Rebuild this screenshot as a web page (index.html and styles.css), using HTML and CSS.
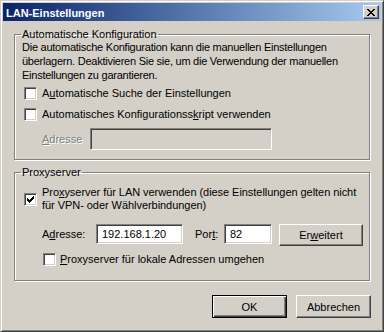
FILE: index.html
```
<html>
<head>
	<link rel="stylesheet" href="styles.css">
</head>
<body>

	<div class="window">
		<div class="titlebar">
			<span class="title">LAN-Einstellungen</span>
			<span class="close">
				<svg width="8" height="7" viewBox="0 0 8 7" shape-rendering="crispEdges"><path d="M0 0h2v1H0z M6 0h2v1H6z M1 1h2v1H1z M5 1h2v1H5z M2 2h4v1H2z M3 3h2v1H3z M2 4h4v1H2z M1 5h2v1H1z M5 5h2v1H5z M0 6h2v1H0z M6 6h2v1H6z" fill="#000"/></svg>
			</span>
		</div>

		<div class="content">
			<fieldset class="group" id="auto">
				<legend>Automatische Konfiguration</legend>
				<div class="inner">
					<p class="note">Die automatische Konfiguration kann die manuellen Einstellungen<br>überlagern. Deaktivieren Sie sie, um die Verwendung der manuellen<br>Einstellungen zu garantieren.</p>
					<div class="check first">
						<span class="box"></span>
						<span class="text">A<u>u</u>tomatische Suche der Einstellungen</span>
					</div>
					<div class="check second">
						<span class="box"></span>
						<span class="text">Automatisches Konfigurationss<u>k</u>ript verwenden</span>
					</div>
					<div class="field-row disabled">
						<span class="lbl"><u>A</u>dresse</span>
						<span class="field"></span>
					</div>
				</div>
			</fieldset>

			<fieldset class="group" id="proxy">
				<legend>Proxyserver</legend>
				<div class="inner">
					<div class="check multi">
						<span class="box">
							<svg width="7" height="7" viewBox="0 0 7 7" shape-rendering="crispEdges"><path d="M6 0h1v1H6z M5 1h2v1H5z M0 2h1v1H0z M4 2h3v1H4z M0 3h2v1H0z M3 3h3v1H3z M0 4h5v1H0z M1 5h3v1H1z M2 6h1v1H2z" fill="#000"/></svg>
						</span>
						<span class="text">Pro<u>x</u>yserver für LAN verwenden (diese Einstellungen gelten nicht<br>für VPN- oder Wählverbindungen)</span>
					</div>
					<div class="proxy-row">
						<span class="lbl addr">A<u>d</u>resse:</span>
						<span class="field addr-field">192.168.1.20</span>
						<span class="lbl port">Por<u>t</u>:</span>
						<span class="field port-field">82</span>
						<span class="btn wide">Er<u>w</u>eitert</span>
					</div>
					<div class="check bypass">
						<span class="box"></span>
						<span class="text"><u>P</u>roxyserver für lokale Adressen umgehen</span>
					</div>
				</div>
			</fieldset>

			<div class="actions">
				<span class="btn default">OK</span>
				<span class="btn">Abbrechen</span>
			</div>
		</div>
	</div>

</body>
</html>
```

FILE: styles.css
```
* {
	box-sizing: border-box;
}

body {
	margin: 0;
	background: #d4d0c8;
	font-family: "Liberation Sans", Arial, sans-serif;
	font-size: 11px;
	color: #000;
}

u {
	text-decoration: underline;
	text-underline-offset: 1px;
}

.window {
	width: 384px;
	height: 332px;
	border: 1px solid;
	border-color: #d4d0c8 #404040 #404040 #d4d0c8;
	box-shadow: inset 1px 1px 0 #fff, inset -1px -1px 0 #808080;
	padding: 2px;
	background: #d4d0c8;
}

/* title bar */
.titlebar {
	height: 18px;
	display: flex;
	align-items: center;
	justify-content: space-between;
	padding: 0 2px 0 3px;
	background: linear-gradient(to right, #0a246a, #a6caf0);
}
.title {
	color: #fff;
	font-weight: bold;
	line-height: 18px;
	padding-top: 1px;
}
.close {
	width: 16px;
	height: 14px;
	display: flex;
	align-items: center;
	justify-content: center;
	background: #d4d0c8;
	border: 1px solid;
	border-color: #fff #404040 #404040 #fff;
	box-shadow: inset -1px -1px 0 #808080;
}

/* dialog body */
.content {
	padding: 0 11px;
}

.group {
	margin: 8px 0 0;
	padding: 0 0 9px 0;
	border: 1px solid #808080;
	box-shadow: 1px 1px 0 #fff, inset 1px 1px 0 #fff;
	min-width: 0;
}
.group legend {
	margin-left: 6px;
	padding: 0 1px;
	line-height: 11px;
}
.inner {
	padding-left: 7px;
}

#proxy {
	margin-top: 7px;
	padding-bottom: 14px;
}

.note {
	margin: 0;
	line-height: 14px;
	letter-spacing: -0.25px;
	white-space: nowrap;
}

.check {
	display: flex;
	align-items: center;
	height: 13px;
	padding-left: 2px;
	line-height: 13px;
	white-space: nowrap;
}
.check .text {
	margin-left: 5px;
}
.check.first {
	margin-top: 5px;
}
.check.second {
	margin-top: 8px;
}
.check.multi {
	margin-top: 8px;
	height: 26px;
}
.check.multi .text {
	letter-spacing: -0.05px;
}
.check.bypass {
	margin-top: 7px;
	padding-left: 21px;
}
.check.bypass .text {
	margin-left: 4px;
}

.box {
	width: 13px;
	height: 13px;
	flex: none;
	display: flex;
	align-items: center;
	justify-content: center;
	background: #fff;
	border: 1px solid;
	border-color: #808080 #fff #fff #808080;
	box-shadow: inset 1px 1px 0 #404040, inset -1px -1px 0 #d4d0c8;
}

.field {
	display: block;
	flex: none;
	background: #fff;
	border: 1px solid;
	border-color: #808080 #fff #fff #808080;
	box-shadow: inset 1px 1px 0 #404040, inset -1px -1px 0 #d4d0c8;
	padding-left: 5px;
	line-height: 18px;
	white-space: nowrap;
}

.field-row {
	display: flex;
	align-items: center;
	margin-top: 7px;
	padding-left: 20px;
	height: 22px;
}
.field-row .lbl {
	width: 48px;
}
.field-row .field {
	width: 182px;
	height: 22px;
}
.disabled .lbl {
	color: #808080;
	text-shadow: 1px 1px 0 #fff;
}
.disabled .field {
	background: #d4d0c8;
}

.proxy-row {
	display: flex;
	align-items: flex-start;
	margin-top: 12px;
	padding-left: 20px;
	height: 22px;
}
.proxy-row .lbl {
	line-height: 20px;
}
.lbl.addr {
	width: 54px;
}
.addr-field {
	width: 87px;
	height: 20px;
}
.lbl.port {
	width: 29px;
	margin-left: 12px;
}
.port-field {
	width: 48px;
	height: 20px;
}

/* push buttons */
.btn {
	display: flex;
	align-items: center;
	justify-content: center;
	flex: none;
	width: 75px;
	height: 23px;
	background: #d4d0c8;
	border: 1px solid;
	border-color: #fff #404040 #404040 #fff;
	box-shadow: inset -1px -1px 0 #808080;
}
.btn.wide {
	width: 84px;
	height: 22px;
	margin-left: 7px;
}
.btn.default {
	border-color: #000;
	box-shadow: inset 1px 1px 0 #fff, inset -1px -1px 0 #404040, inset -2px -2px 0 #808080;
}

.actions {
	display: flex;
	justify-content: flex-end;
	gap: 9px;
	margin-top: 14px;
	margin-right: -1px;
}
```
